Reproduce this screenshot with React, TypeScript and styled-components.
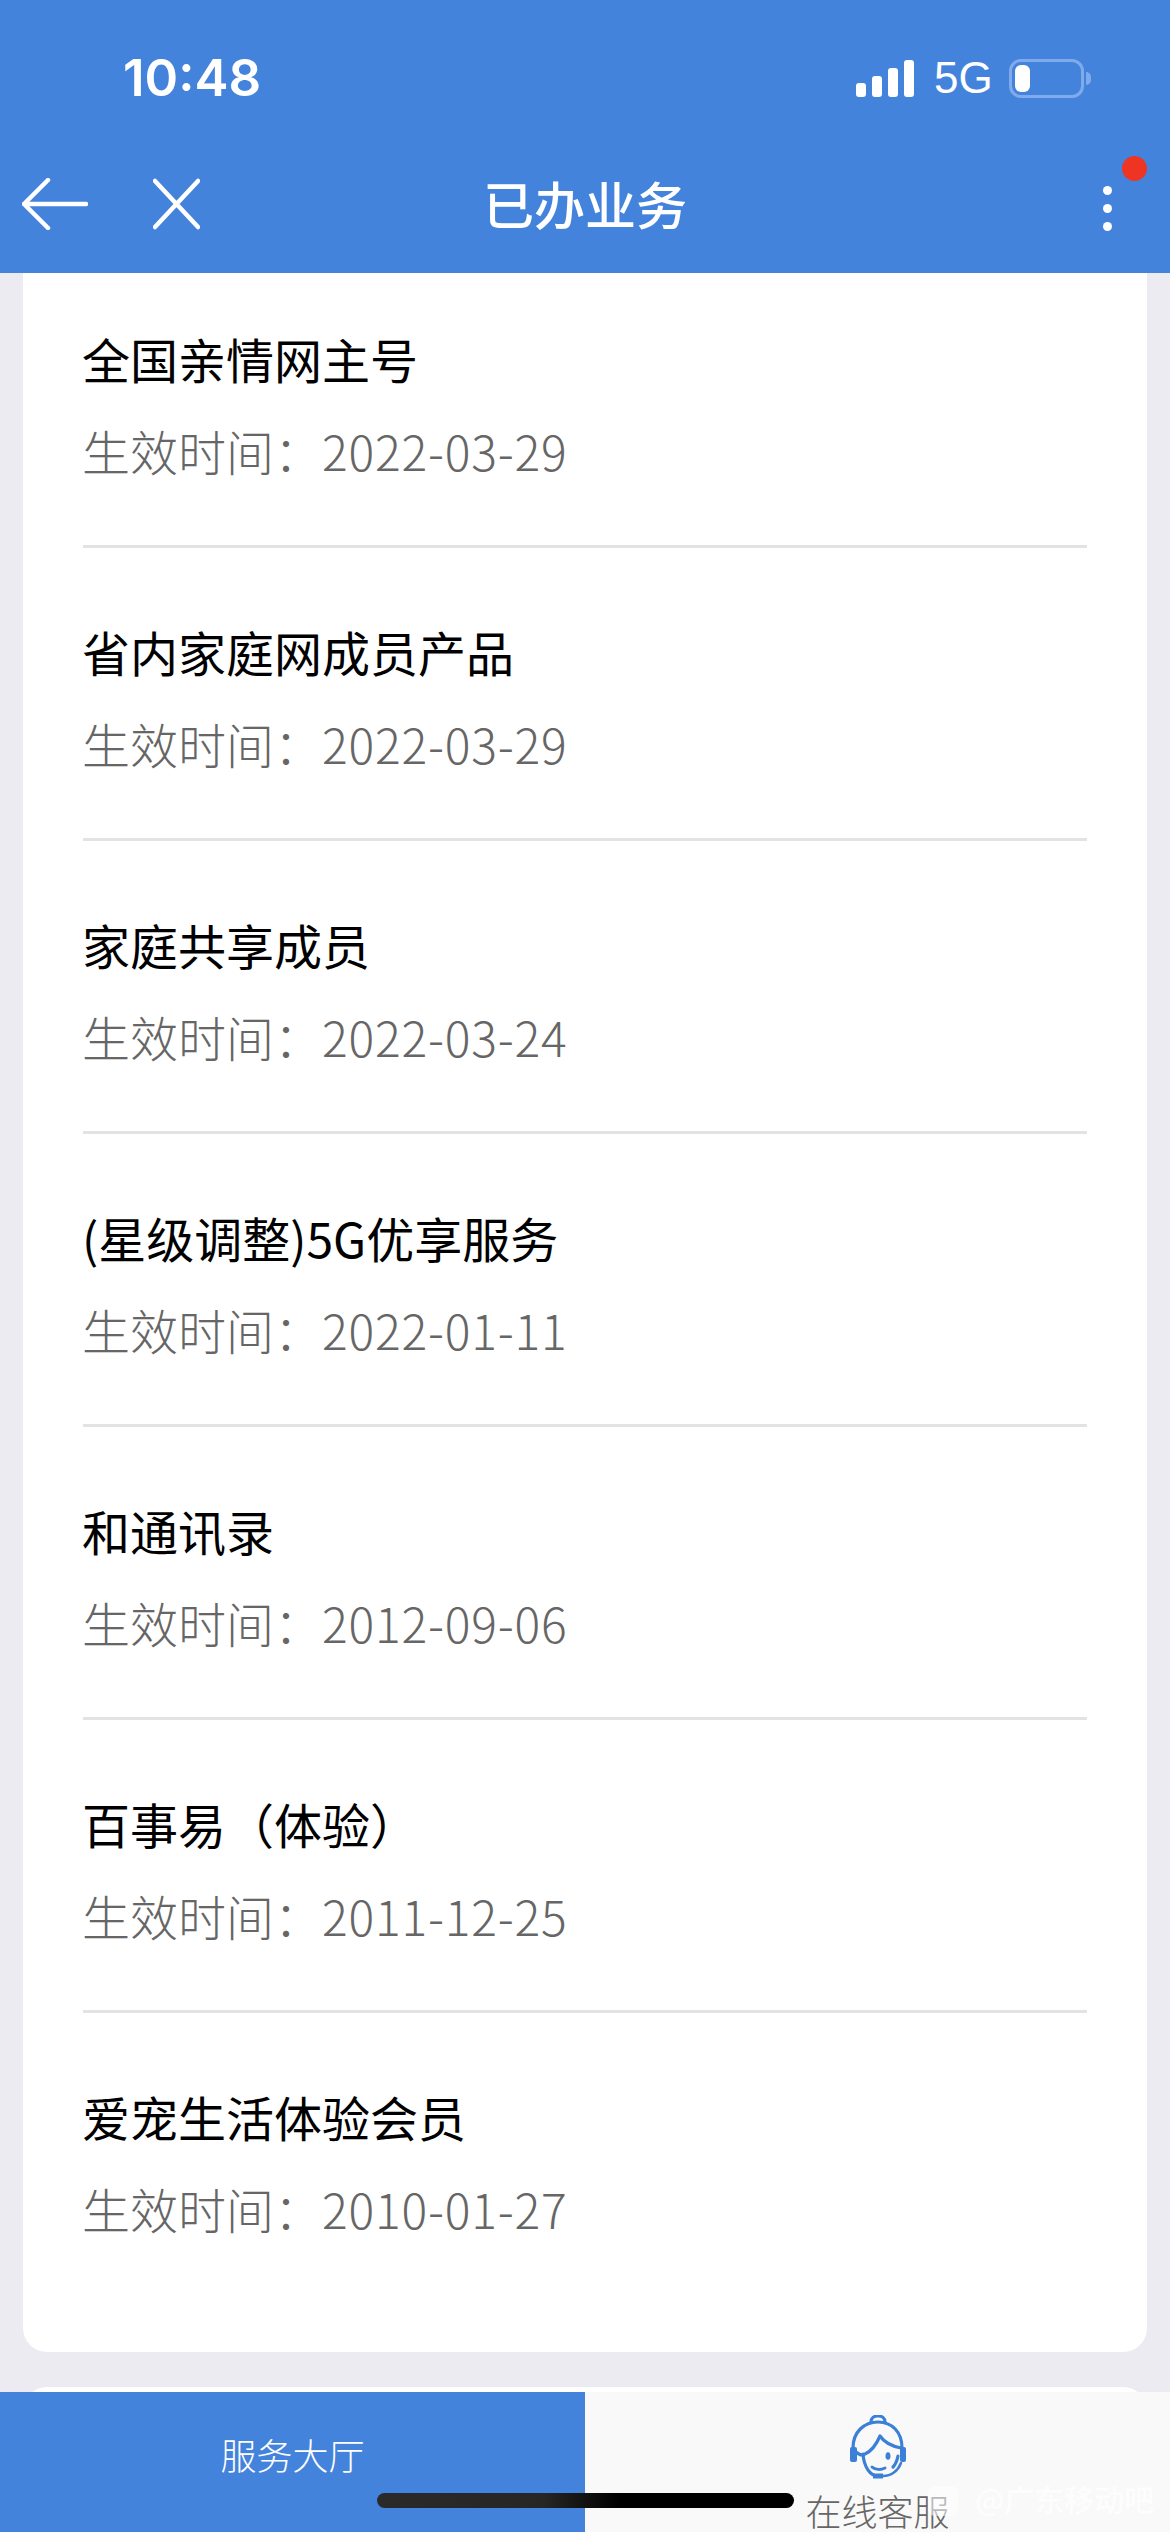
import { createGlobalStyle, styled } from 'styled-components'

const GlobalStyle = createGlobalStyle`
  html, body {
    margin: 0;
    padding: 0;
    background: #ebebf1;
  }
  * {
    box-sizing: border-box;
  }
`

const Screen = styled.div`
  position: relative;
  width: 1170px;
  height: 2532px;
  display: flex;
  flex-direction: column;
  overflow: hidden;
  background: #ebebf1;
  font-family: 'Noto Sans CJK SC', 'Noto Sans', sans-serif;
`

const Header = styled.header`
  height: 273px;
  flex: none;
  background: #4483dc;
  color: #fff;
`

const StatusBar = styled.div`
  height: 155px;
  display: flex;
  align-items: flex-start;
  justify-content: space-between;
  padding: 49px 86px 0 123px;
`

const Clock = styled.span`
  font-family: Inter, sans-serif;
  font-size: 51px;
  line-height: 58px;
  font-weight: 600;
`

const StatusIcons = styled.div`
  display: flex;
  align-items: center;
  height: 58px;
  gap: 20px;
`

const SignalBars = styled.div`
  display: flex;
  align-items: flex-end;
  gap: 6px;
  height: 37px;
`

const Bar = styled.i<{ $h: number }>`
  display: block;
  width: 10px;
  height: ${p => p.$h}px;
  border-radius: 3px;
  background: #fff;
`

const NetworkLabel = styled.span`
  font-family: 'Liberation Sans', sans-serif;
  font-size: 44px;
  line-height: 58px;
  width: 55px;
`

const Battery = styled.div`
  position: relative;
  width: 75px;
  height: 39px;
  border: 3px solid #7fabec;
  border-radius: 12px;
  padding: 3px;

  &::after {
    content: '';
    position: absolute;
    right: -10px;
    top: 10px;
    width: 5px;
    height: 13px;
    border-radius: 0 6px 6px 0;
    background: #7fabec;
  }
`

const BatteryLevel = styled.div`
  width: 15px;
  height: 27px;
  border-radius: 6px;
  background: #fff;
`

const NavBar = styled.nav`
  position: relative;
  height: 118px;
  display: flex;
  align-items: flex-start;
  justify-content: center;
`

const NavActions = styled.div`
  position: absolute;
  left: 22px;
  top: 23px;
  display: flex;
  gap: 65px;
`

const NavTitle = styled.h1`
  margin: 0;
  font-size: 51px;
  line-height: 96px;
  font-weight: 500;
`

const MoreDots = styled.div`
  position: absolute;
  left: 1103px;
  top: 31px;
  display: flex;
  flex-direction: column;
  gap: 9px;
`

const Dot = styled.i`
  display: block;
  width: 9px;
  height: 9px;
  border-radius: 50%;
  background: #fff;
`

const RedBadge = styled.i`
  position: absolute;
  left: 1122px;
  top: 1px;
  width: 25px;
  height: 25px;
  border-radius: 50%;
  background: #ee3524;
`

const Main = styled.main`
  flex: 1;
  min-height: 0;
  padding: 0 23px;
  overflow: hidden;
`

const Card = styled.section`
  background: #fff;
  border-radius: 0 0 24px 24px;
  padding: 0 60px 46px;
`

const NextCard = styled.div`
  height: 24px;
  margin-top: 35px;
  background: #fff;
  border-radius: 24px 24px 0 0;
`

const Row = styled.article`
  height: 293px;
  padding-top: 68px;
  border-bottom: 3px solid #e3e3e5;

  &:first-child {
    height: 275px;
    padding-top: 50px;
  }

  &:last-child {
    border-bottom: none;
  }
`

const RowTitle = styled.div`
  font-size: 48px;
  line-height: 70px;
  color: #000;
  margin-left: -1px;
`

const RowDate = styled.div`
  margin-top: 22px;
  margin-left: -1px;
  font-size: 48px;
  line-height: 70px;
  font-weight: 300;
  color: #666;
`

const DateValue = styled.span`
  letter-spacing: 0.8px;
`

const TabBar = styled.footer`
  height: 140px;
  flex: none;
  display: flex;
`

const ServiceTab = styled.div`
  width: 585px;
  padding-top: 36px;
  text-align: center;
  background: #4483dc;
  color: #fff;
  font-size: 36px;
  line-height: 52px;
  font-weight: 300;
`

const SupportTab = styled.div`
  flex: 1;
  display: flex;
  flex-direction: column;
  align-items: center;
  padding-top: 23px;
  background: #f9f9f9;
`

const SupportLabel = styled.span`
  margin-top: 10px;
  color: #666;
  font-size: 36px;
  line-height: 40px;
  font-weight: 300;
  white-space: nowrap;
`

const HomeIndicator = styled.div`
  position: absolute;
  left: 377px;
  top: 2493px;
  width: 417px;
  height: 15px;
  border-radius: 8px;
  background: linear-gradient(90deg, #2a2a2a 0%, #262626 40%, #000 58%);
`

const Watermark = styled.div`
  position: absolute;
  left: 928px;
  top: 2480px;
  display: flex;
  align-items: center;
  gap: 17px;
  color: rgba(255, 255, 255, 0.8);
  font-size: 30px;
  line-height: 36px;
  font-weight: 500;
  white-space: nowrap;
`

const WatermarkBox = styled.i`
  display: block;
  width: 30px;
  height: 30px;
  margin-top: 6px;
  background: rgba(255, 255, 255, 0.55);
  border-radius: 7px;
`

const services = [
  { name: '全国亲情网主号', date: '2022-03-29' },
  { name: '省内家庭网成员产品', date: '2022-03-29' },
  { name: '家庭共享成员', date: '2022-03-24' },
  { name: '(星级调整)5G优享服务', date: '2022-01-11' },
  { name: '和通讯录', date: '2012-09-06' },
  { name: '百事易（体验）', date: '2011-12-25' },
  { name: '爱宠生活体验会员', date: '2010-01-27' }
]

function BackIcon() {
  return (
    <svg width="66" height="52" viewBox="0 0 66 52" fill="none" stroke="#fff" strokeWidth="4.5" strokeLinecap="round" strokeLinejoin="round">
      <path d="M64 26H2M26 2 2 26l24 24" />
    </svg>
  )
}

function CloseIcon() {
  return (
    <svg width="47" height="52" viewBox="0 0 47 52" fill="none" stroke="#fff" strokeWidth="4.5" strokeLinecap="round">
      <path d="M2 3l43 46M45 3 2 49" />
    </svg>
  )
}

function AgentIcon() {
  return (
    <svg width="57" height="65" viewBox="0 0 57 65" fill="none" stroke="#3b80d6" strokeWidth="3.2" strokeLinecap="round" strokeLinejoin="round">
      <path d="M22 7c0-4 3-6 7-6s7 2 7 6" />
      <path d="M4 33C4 17 15 7 29 7s24 10 24 26" />
      <path d="M6 36c3 3 7 5 10 3 7-3 12-11 15-18 4 6 11 10 21 12" />
      <path d="M14 39c1 13 7 22 15 22" />
      <path d="M49 41c-1 5-2 8-5 11" />
      <rect x="1" y="32" width="7" height="15" rx="2" fill="#3b80d6" stroke="none" />
      <rect x="51" y="32" width="6" height="15" rx="2" fill="#3b80d6" stroke="none" />
      <ellipse cx="39" cy="41" rx="2.5" ry="3.8" fill="#3b80d6" stroke="none" />
      <path d="M23 52c3 3 9 3 13 1" strokeWidth="3" />
      <path d="M24 61h10" strokeWidth="5" strokeLinecap="butt" />
      <path d="M34 61c8 0 15-5 18-13" strokeWidth="2.5" />
    </svg>
  )
}

export default function App() {
  return (
    <Screen>
      <GlobalStyle />
      <Header>
        <StatusBar>
          <Clock>10:48</Clock>
          <StatusIcons>
            <SignalBars>
              {[14, 21, 29, 37].map(h => (
                <Bar key={h} $h={h} />
              ))}
            </SignalBars>
            <NetworkLabel>5G</NetworkLabel>
            <Battery>
              <BatteryLevel />
            </Battery>
          </StatusIcons>
        </StatusBar>
        <NavBar>
          <NavActions>
            <BackIcon />
            <CloseIcon />
          </NavActions>
          <NavTitle>已办业务</NavTitle>
          <MoreDots>
            <Dot />
            <Dot />
            <Dot />
          </MoreDots>
          <RedBadge />
        </NavBar>
      </Header>
      <Main>
        <Card>
          {services.map(s => (
            <Row key={s.name}>
              <RowTitle>{s.name}</RowTitle>
              <RowDate>
                生效时间：<DateValue>{s.date}</DateValue>
              </RowDate>
            </Row>
          ))}
        </Card>
        <NextCard />
      </Main>
      <TabBar>
        <ServiceTab>服务大厅</ServiceTab>
        <SupportTab>
          <AgentIcon />
          <SupportLabel>在线客服</SupportLabel>
        </SupportTab>
      </TabBar>
      <HomeIndicator />
      <Watermark>
        <WatermarkBox />
        @广东移动吧
      </Watermark>
    </Screen>
  )
}
